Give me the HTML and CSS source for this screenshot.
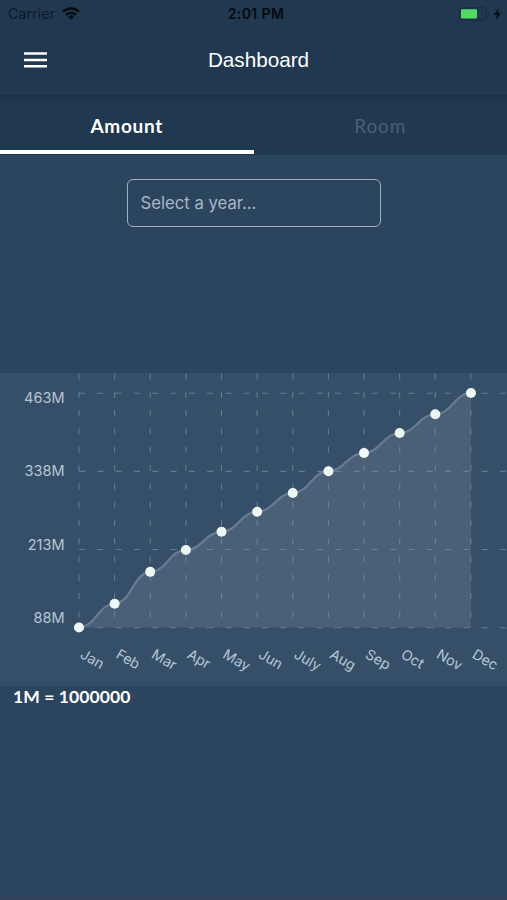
FILE: index.html
```html
<!DOCTYPE html>
<html lang="en">
<head>
    <meta charset="UTF-8">
    <meta name="viewport" content="width=device-width, initial-scale=1.0">
    <title>Dashboard</title>
    <link rel="stylesheet" href="styles.css">
</head>
<body>
    <header class="header">
        <div class="status-bar">
            <div class="status-left">
                <span class="carrier">Carrier</span>
                <svg class="wifi" width="18" height="13" viewBox="0 0 18 13" fill="none" stroke="#050a10" stroke-width="2.4">
                    <path d="M1.2 4.7a11.2 11.2 0 0 1 15.6 0"/>
                    <path d="M4 7.9a7.2 7.2 0 0 1 10 0"/>
                    <path d="M6.2 9.7a4 4 0 0 1 5.6 0L9 12.6z" fill="#050a10" stroke="none"/>
                </svg>
            </div>
            <span class="clock">2:01 PM</span>
            <div class="status-right">
                <svg width="44" height="14" viewBox="0 0 44 14">
                    <rect x="1.5" y="0.8" width="27" height="12.2" rx="3" fill="none" stroke="#152a3f" stroke-width="1"/>
                    <path d="M30 4.8q1.8 2.1 0 4.2z" fill="#152a3f"/>
                    <rect x="3" y="2.2" width="16" height="9.4" rx="1" fill="#4fdb64"/>
                    <path d="M40.6 1.2L35.8 7.8h3.2l-1.2 5.2 5.2-7h-3.5z" fill="#050a10"/>
                </svg>
            </div>
        </div>
        <div class="nav-bar">
            <button class="menu-button" type="button" aria-label="Menu">
                <svg width="23" height="16" viewBox="0 0 23 16" stroke="#fff" stroke-width="2.5">
                    <path d="M0 1.5h23M0 8h23M0 14.2h23"/>
                </svg>
            </button>
            <h1>Dashboard</h1>
        </div>
    </header>

    <nav class="tabs">
        <div class="tab active"><span class="tab-amount">Amount</span></div>
        <div class="tab"><span class="tab-room">Room</span></div>
    </nav>

    <main>
        <div class="year-select"><span>Select a year...</span></div>
        <svg class="chart" id="chart" width="507" height="313" viewBox="0 0 507 313"></svg>
        <p class="note">1M = 1000000</p>
    </main>

    <script>
        const months = ["Jan", "Feb", "Mar", "Apr", "May", "Jun", "July", "Aug", "Sep", "Oct", "Nov", "Dec"];
        const values = [88, 126, 177, 212, 241, 273, 303, 338, 367, 399, 429, 463];
        const chartLeft = 79;
        const chartTop = 20;
        const chartBottom = 254.5;
        const step = 35.63;

        const x = i => chartLeft + i * step;
        const y = v => chartBottom - (v - 88) / (463 - 88) * (chartBottom - chartTop);

        let grid = "";
        let dots = "";
        let labels = "";
        let line = `M${x(0)} ${y(values[0])}`;

        [463, 338, 213, 88].forEach((v, i) => {
            const gy = y(v) + 0.2;
            grid += `<line class="grid" x1="79" x2="507" y1="${gy}" y2="${gy}"/>`;
            labels += `<text class="y-label" x="64.5" y="${30 + i * 73.4}">${v}M</text>`;
        });

        months.forEach((month, i) => {
            const px = x(i);
            const py = y(values[i]);
            grid += `<line class="grid" x1="${px}" x2="${px}" y1="0.5" y2="254"/>`;
            dots += `<circle class="dot" cx="${px}" cy="${py}" r="5"/>`;
            labels += `<text class="x-label" transform="translate(${px + 0.3} 284.3) rotate(30)">${month}</text>`;

            if (i > 0) {
                const prevX = x(i - 1);
                const prevY = y(values[i - 1]);
                const midX = (prevX + px) / 2;
                const midY = (prevY + py) / 2;
                line += ` Q${(midX + prevX) / 2} ${prevY} ${midX} ${midY}`;
                line += ` Q${(midX + px) / 2} ${py} ${px} ${py}`;
            }
        });

        document.getElementById("chart").innerHTML =
            `<path class="area" d="${line} V${chartBottom} H${chartLeft} Z"/>` +
            grid +
            `<path class="line" d="${line}"/>` +
            dots + labels;
    </script>
</body>
</html>
```

FILE: styles.css
```css
body {
    margin: 0;
    height: 900px;
    box-sizing: border-box;
    overflow: hidden;
    background-color: #2c455f;
    color: #fff;
    font-family: Inter, sans-serif;
    border-bottom: 1px solid #343e59;
}

.header {
    height: 95px;
    background-color: #203850;
    box-shadow: 0 1px 4px rgba(10, 25, 45, 0.45);
    position: relative;
}

.status-bar {
    display: grid;
    grid-template-columns: 1fr auto 1fr;
    align-items: center;
    height: 27px;
    padding: 0 5px 0 8px;
    color: #050a10;
    font-size: 14px;
}

.status-left {
    display: flex;
    align-items: center;
    gap: 7px;
}

.carrier {
    color: #0d1a28;
    letter-spacing: 0.2px;
}

.clock {
    font-weight: 600;
    font-size: 14px;
    letter-spacing: 0.4px;
    margin-left: 2px;
}

.status-right {
    display: flex;
    justify-content: flex-end;
}

.nav-bar {
    display: grid;
    grid-template-columns: 80px 1fr 80px;
    align-items: center;
    height: 66px;
}

.menu-button {
    display: flex;
    width: 23px;
    margin-left: 24px;
    padding: 0;
    border: none;
    background: none;
}

h1 {
    margin: 0 0 0 10px;
    text-align: center;
    font-family: "Liberation Sans", sans-serif;
    font-size: 20.7px;
    font-weight: normal;
}

.tabs {
    display: flex;
    height: 60px;
    background-color: #203850;
}

.tab {
    flex: 1;
    display: flex;
    align-items: center;
    justify-content: center;
    box-sizing: border-box;
    height: 59px;
    padding-top: 6px;
    border-bottom: 4px solid transparent;
    font-family: Lato, sans-serif;
    font-size: 19px;
    color: #48607a;
}

.tab.active {
    border-bottom-color: #fff;
    color: #fff;
    font-weight: bold;
}

.tab-amount {
    letter-spacing: 0.7px;
}

.tab-room {
    letter-spacing: 0.9px;
}

.year-select {
    display: flex;
    align-items: center;
    box-sizing: border-box;
    width: 254px;
    height: 48px;
    margin: 24px auto 146px;
    padding-left: 13px;
    border: 1.5px solid #a0b0bf;
    border-radius: 6px;
    color: #a8b7c6;
    font-size: 16.7px;
}

.chart {
    display: block;
    background-color: #364f68;
}

.grid {
    stroke: #7b92a5;
    stroke-opacity: 0.65;
    stroke-width: 1.1;
    stroke-dasharray: 6.1 12.2;
}

.area {
    fill: #4a6077;
}

.line {
    fill: none;
    stroke: #687d94;
    stroke-width: 2.2;
}

.dot {
    fill: #edf8f2;
}

.y-label,
.x-label {
    fill: #b5c7d3;
    font-size: 14.5px;
}

.x-label {
    font-size: 14.2px;
}

.y-label {
    text-anchor: end;
}

.note {
    margin: 0 0 0 13px;
    font-family: Lato, sans-serif;
    font-size: 17.5px;
    font-weight: bold;
    letter-spacing: 0.1px;
    line-height: 22px;
}
```
